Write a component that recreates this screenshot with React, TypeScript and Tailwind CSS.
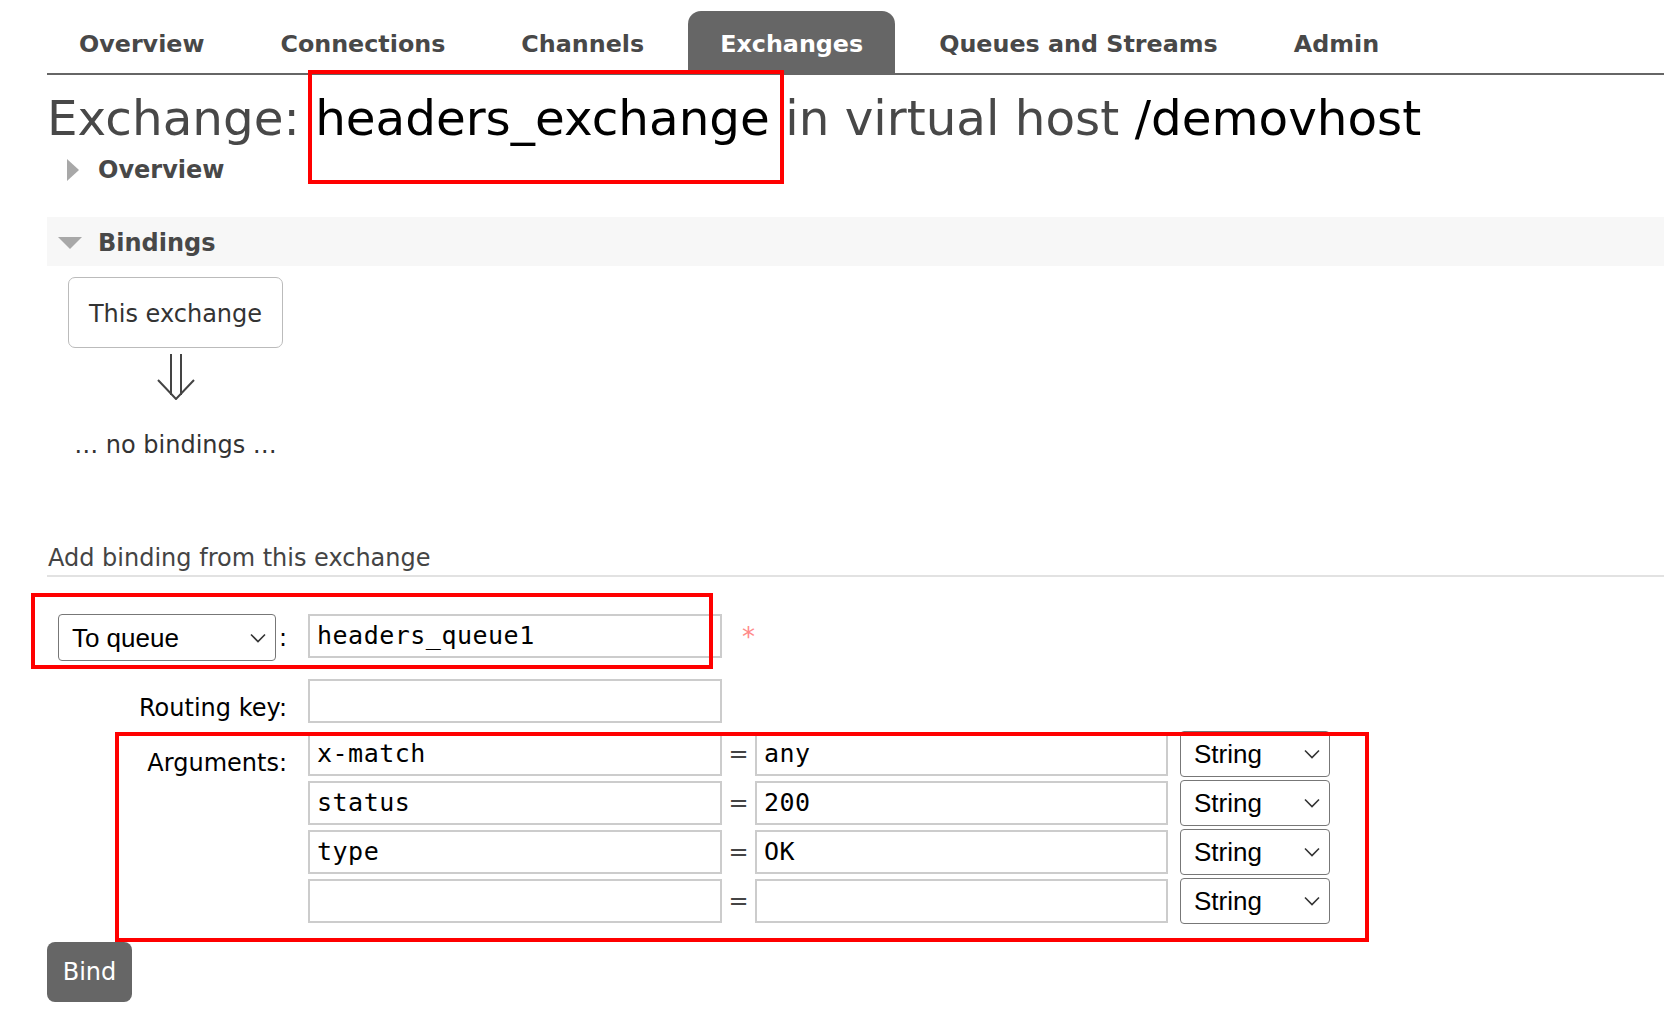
import React from 'react';

const sans = "font-['DejaVu_Sans',Verdana,sans-serif]";
const mono = "font-['DejaVu_Sans_Mono',Menlo,monospace]";
const arial = "font-['Liberation_Sans',Arial,sans-serif]";

const tabs = ['Overview', 'Connections', 'Channels', 'Exchanges', 'Queues and Streams', 'Admin'];

const args = [
  { key: 'x-match', value: 'any' },
  { key: 'status', value: '200' },
  { key: 'type', value: 'OK' },
  { key: '', value: '' },
];

function Chevron() {
  return (
    <svg width="16" height="10" viewBox="0 0 16 10" fill="none">
      <path d="M1 1.5L8 8.5L15 1.5" stroke="#333" strokeWidth="1.6" />
    </svg>
  );
}

function FakeSelect({ label, className }: { label: string; className: string }) {
  return (
    <div
      className={`${className} ${arial} flex items-center justify-between border border-[#777] rounded-[4px] bg-white pl-[13px] pr-[9px] text-[26px] text-black`}
    >
      <span>{label}</span>
      <Chevron />
    </div>
  );
}

function TextBox({ value, className }: { value: string; className: string }) {
  return (
    <div
      className={`${className} ${mono} flex items-center border-2 border-[#ccc] bg-white pl-[7px] text-[25px] tracking-[0.5px] text-black`}
    >
      {value}
    </div>
  );
}

export default function App() {
  return (
    <div className={`relative min-h-[1024px] bg-white ${sans} text-[24px] leading-[28px] text-[#444]`}>
      {/* annotation boxes */}
      <div className="absolute left-[308px] top-[70px] w-[476px] h-[114px] border-4 border-[#ff0000] pointer-events-none" />
      <div className="absolute left-[31px] top-[593px] w-[682px] h-[76px] border-4 border-[#ff0000] pointer-events-none" />
      <div className="absolute left-[115px] top-[732px] w-[1254px] h-[210px] border-4 border-[#ff0000] pointer-events-none" />

      <div className="pl-[47px] pt-[11px]">
        {/* tabs */}
        <div className="flex border-b-2 border-[#666]">
          {tabs.map((t) => (
            <div
              key={t}
              className={`mr-[12px] flex h-[62px] items-center rounded-t-[13px] px-8 pt-[3px] text-[23.8px] font-bold ${
                t === 'Exchanges' ? 'bg-[#666] text-white' : 'text-[#484848]'
              }`}
            >
              {t}
            </div>
          ))}
        </div>

        {/* heading */}
        <h1 className="mt-[15px] text-[48.4px] leading-[56px] text-[#484848] whitespace-nowrap">
          Exchange: <span className="text-black">headers_exchange</span> in virtual host{' '}
          <span className="text-black">/demovhost</span>
        </h1>

        {/* overview (collapsed) */}
        <div className="mt-[10px] flex items-center">
          <div className="ml-[20px] h-0 w-0 border-y-[11px] border-l-[12px] border-y-transparent border-l-[#a8a8a8]" />
          <span className="ml-[19px] font-bold text-[#484848]">Overview</span>
        </div>

        {/* bindings */}
        <div className="mt-[33px] flex items-center bg-[#f7f7f7] pt-[12px] pb-[9px]">
          <div className="ml-[11px] h-0 w-0 border-x-[12px] border-t-[12px] border-x-transparent border-t-[#a8a8a8]" />
          <span className="ml-[16px] font-bold text-[#484848]">Bindings</span>
        </div>

        <div className="ml-[21px] mt-[11px] flex w-[215px] flex-col items-center">
          <div className="w-full rounded-[7px] border border-[#bbb] pt-[22px] pb-[19px] text-center text-[#333]">
            This exchange
          </div>
          <svg className="mt-[6px]" width="38" height="46" viewBox="0 0 38 46" fill="none">
            <path d="M14 0V41M24 0V41" stroke="#444" strokeWidth="2" />
            <path d="M1 26L19 45L37 26" stroke="#444" strokeWidth="2" />
          </svg>
          <div className="mt-[31px] whitespace-nowrap text-[#333]">… no bindings …</div>
        </div>

        {/* add binding */}
        <div className="mt-[85px] border-b-2 border-[#e2e2e2] pb-[3px]">
          <span className="ml-px">Add binding from this exchange</span>
        </div>

        <div className="mt-[37px] text-black">
          <div className="flex items-start">
            <div className="flex w-[261px] items-center justify-end pr-[21px]">
              <FakeSelect label="To queue" className="h-[47px] w-[218px]" />
              <span className="ml-[3px]">:</span>
            </div>
            <TextBox value="headers_queue1" className="h-[44px] w-[414px]" />
            <span className="ml-[20px] pt-[9px] text-[26px] text-[#ff8a8a]">*</span>
          </div>

          <div className="mt-[18px] flex items-start">
            <div className="w-[261px] pr-[21px] pt-[15px] text-right">Routing key:</div>
            <TextBox value="" className="h-[44px] w-[414px]" />
          </div>

          <div className="mt-[8px] flex items-start">
            <div className="w-[261px] pr-[21px] pt-[18px] text-right">Arguments:</div>
            <div className="flex flex-col gap-[3px]">
              {args.map((a, i) => (
                <div key={i} className="flex h-[46px] items-center">
                  <TextBox value={a.key} className="h-[44px] w-[414px]" />
                  <span className="w-[33px] text-center text-[#444]">=</span>
                  <TextBox value={a.value} className="h-[44px] w-[413px]" />
                  <FakeSelect label="String" className="ml-[12px] h-[46px] w-[150px]" />
                </div>
              ))}
            </div>
          </div>

          <button className="mt-[18px] flex h-[60px] w-[85px] items-center justify-center rounded-[8px] bg-[#666] text-white">
            Bind
          </button>
        </div>
      </div>
    </div>
  );
}
